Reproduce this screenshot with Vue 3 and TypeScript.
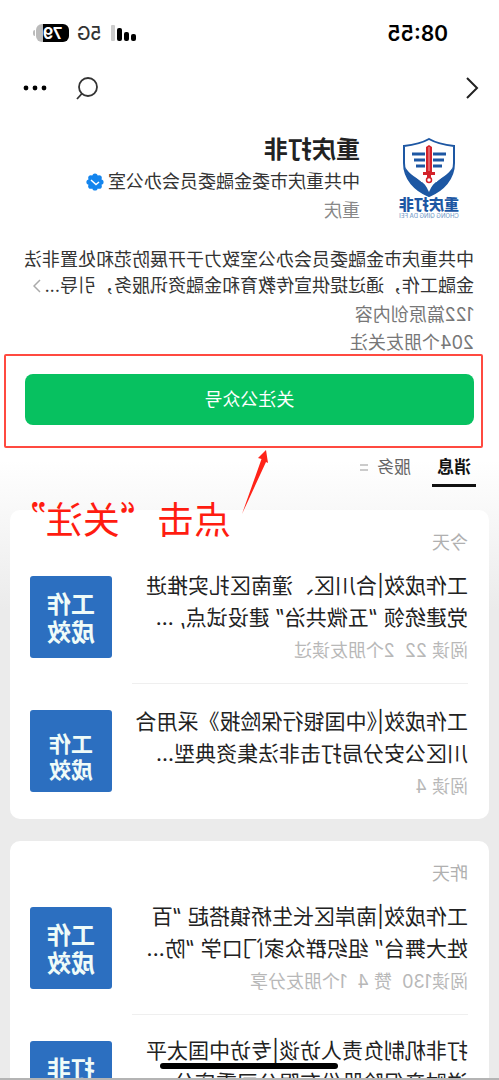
<script setup lang="ts">
interface Article {
  lines: string[]
  meta: string
  thumb: [string, string]
  small?: boolean
}
interface Day {
  label: string
  articles: Article[]
}

const days: Day[] = [
  {
    label: '今天',
    articles: [
      {
        lines: ['工作成效|合川区、潼南区扎实推进', '党建统领 “五微共治” 建设试点, ...'],
        meta: '阅读 22\u00a0 2个朋友读过',
        thumb: ['工作', '成效'],
      },
      {
        lines: ['工作成效|《中国银行保险报》采用合', '川区公安分局打击非法集资典型...'],
        meta: '阅读 4',
        thumb: ['工作', '成效'],
        small: true,
      },
    ],
  },
  {
    label: '昨天',
    articles: [
      {
        lines: ['工作成效|南岸区长生桥镇搭起 “百', '姓大舞台” 组织群众家门口学 “防...'],
        meta: '阅读130\u00a0 赞 4\u00a0 1个朋友分享',
        thumb: ['工作', '成效'],
      },
      {
        lines: ['打非机制负责人访谈|专访中国太平', '洋财产保险股份有限公司重庆分...'],
        meta: '阅读 96',
        thumb: ['打非', '访谈'],
      },
    ],
  },
]
</script>

<template>
  <div class="phone">
    <header class="status">
      <span class="time">08:55</span>
      <span class="signals">
        <svg width="27" height="18" viewBox="0 0 27 18" aria-hidden="true">
          <rect x="1" y="10" width="5" height="7" rx="2" fill="#000" />
          <rect x="8" y="8" width="5" height="9" rx="2" fill="#000" />
          <rect x="15" y="4" width="5" height="13" rx="2" fill="#000" />
          <rect x="22" y="1" width="4" height="16" rx="1" fill="#ccc" />
        </svg>
        <span class="net">5G</span>
        <span class="battery">79</span>
      </span>
    </header>

    <nav class="nav">
      <button class="icon-btn" aria-label="返回">
        <svg width="14" height="24" viewBox="0 0 14 24"><path d="M12 2 L2 12 L12 22" fill="none" stroke="#222" stroke-width="2" /></svg>
      </button>
      <span class="nav-right">
        <button class="icon-btn" aria-label="搜索">
          <svg width="24" height="24" viewBox="0 0 24 24">
            <circle cx="11" cy="11" r="9" fill="none" stroke="#333" stroke-width="1.800" />
            <path d="M17 17.500 L22 23" stroke="#333" stroke-width="1.800" />
          </svg>
        </button>
        <button class="icon-btn" aria-label="更多">
          <svg width="24" height="6" viewBox="0 0 24 6">
            <circle cx="3" cy="3" r="2.400" /><circle cx="12" cy="3" r="2.400" /><circle cx="21" cy="3" r="2.400" />
          </svg>
        </button>
      </span>
    </nav>

    <section class="profile">
      <svg class="logo" width="68" height="84" viewBox="0 0 68 84" role="img" aria-label="重庆打非">
        <path d="M34 3 C27 7 18 9 9 10 V27 C9 43 20 54 34 60 C48 54 59 43 59 27 V10 C50 9 41 7 34 3Z" fill="#fff" stroke="#1d57a3" stroke-width="2" />
        <path d="M10 31 C15 39 22 42 27 46 C31 49 32 52 34 56 C36 52 37 49 41 46 C46 42 53 39 58 31 C57 45 46 55 34 60 C22 55 11 45 10 31Z" fill="#1d57a3" />
        <path d="M16 36 L27 46 M52 36 L41 46" stroke="#fff" stroke-width="1" />
        <path d="M17 18 H30 M38 18 H51 M19 24 H30 M38 24 H49 M21 30 H30 M38 30 H47" stroke="#1d57a3" stroke-width="3" />
        <path d="M31 11 L34 9 L37 11 V36 H40 V39 H36 V42 H32 V39 H28 V36 H31Z" fill="#d3222a" />
        <path d="M34 11 V35" stroke="#f0a0a0" stroke-width="1" />
        <circle cx="34" cy="44" r="2.500" fill="none" stroke="#d3222a" stroke-width="1.500" />
        <text x="34" y="74" class="logo-name" text-anchor="middle">重庆打非</text>
        <text x="34" y="82" class="logo-sub" text-anchor="middle">CHONG QING DA FEI</text>
      </svg>
      <div class="who">
        <h1>重庆打非</h1>
        <p class="org">
          中共重庆市委金融委员会办公室
          <svg width="18" height="18" viewBox="0 0 18 18" role="img" aria-label="已认证">
            <g fill="#1485ee">
              <circle cx="9" cy="9" r="7" />
              <circle cx="9" cy="3" r="2.600" /><circle cx="9" cy="15" r="2.600" />
              <circle cx="3" cy="9" r="2.600" /><circle cx="15" cy="9" r="2.600" />
              <circle cx="4.800" cy="4.800" r="2.600" /><circle cx="13.200" cy="4.800" r="2.600" />
              <circle cx="4.800" cy="13.200" r="2.600" /><circle cx="13.200" cy="13.200" r="2.600" />
            </g>
            <path d="M5 9 L8 11.500 L13 7" fill="none" stroke="#fff" stroke-width="1.500" />
          </svg>
        </p>
        <p class="place">重庆</p>
      </div>
    </section>

    <section class="about">
      <p class="desc">
        <span class="line">中共重庆市金融委员会办公室致力于开展防范和处置非法</span>
        <span class="line split">
          <span>金融工作，通过提供宣传教育和金融资讯服务，引导...</span>
          <svg width="8" height="14" viewBox="0 0 8 14"><path d="M1 1 L7 7 L1 13" fill="none" stroke="#aaa" stroke-width="1.500" /></svg>
        </span>
      </p>
      <p class="stat">122篇原创内容</p>
      <p class="stat">204个朋友关注</p>
    </section>

    <div class="follow-wrap">
      <button class="follow">关注公众号</button>
      <div class="frame"></div>
      <svg class="arrow" width="32" height="66" viewBox="0 0 32 66" aria-hidden="true">
        <path d="M6 1 L14 9 L10.500 10 L30 65 L6 13 L4 14Z" fill="#ff2318" />
      </svg>
      <span class="hint">点击“关注”</span>
    </div>

    <div class="tabs">
      <button class="tab active">消息</button>
      <button class="tab">服务</button>
      <svg width="8" height="8" viewBox="0 0 8 8" aria-hidden="true"><path d="M0 1 H8 M0 6 H8" stroke="#bbb" stroke-width="1.500" /></svg>
    </div>

    <main class="feed">
      <section v-for="day in days" :key="day.label" class="card">
        <h2>{{ day.label }}</h2>
        <article v-for="(a, i) in day.articles" :key="i">
          <div class="body">
            <h3>
              <span v-for="l in a.lines" :key="l" class="line">
                <template v-for="(part, k) in l.split('《')" :key="k"><span v-if="k > 0" class="half">《</span>{{ part }}</template>
              </span>
            </h3>
            <p class="meta">{{ a.meta }}</p>
          </div>
          <div class="thumb" :class="{ small: a.small }">
            <span>{{ a.thumb[0] }}</span>
            <span>{{ a.thumb[1] }}</span>
          </div>
        </article>
      </section>
    </main>
    <div class="home"></div>
  </div>
</template>

<style>
body {
  margin: 0;
  background: #ebebeb;
}
</style>

<style scoped>
* {
  box-sizing: border-box;
}
.phone {
  position: relative;
  height: 100vh;
  overflow: hidden;
  transform: scaleX(-1);
  background: linear-gradient(#fff 460px, #ebebeb 610px);
  border-bottom: 2px solid #b4b4b4;
  font-family: Inter, "Noto Sans CJK SC", sans-serif;
  font-size: 18px;
  color: #222;
}
h1, h2, h3, p {
  margin: 0;
  font-weight: 400;
}
button {
  padding: 0;
  border: 0;
  background: none;
  font: inherit;
  color: inherit;
}
svg {
  display: block;
  flex: none;
}
.line {
  display: block;
  white-space: nowrap;
}
.status {
  display: flex;
  justify-content: space-between;
  align-items: center;
  height: 66px;
  padding: 0 33px 0 51px;
}
.time {
  font-size: 21px;
  font-weight: 600;
  color: #000;
}
.signals {
  display: flex;
  align-items: center;
  gap: 8px;
}
.net {
  font-weight: 500;
  color: #333;
}
.battery {
  position: relative;
  width: 33px;
  height: 18px;
  margin-right: 3px;
  border-radius: 6px;
  background: linear-gradient(90deg, #000 79%, #bbb 79%);
  color: #fff;
  font-size: 16px;
  font-weight: 700;
  line-height: 18px;
  text-align: center;
}
.battery::after {
  content: "";
  position: absolute;
  right: -3px;
  top: 6px;
  width: 2px;
  height: 6px;
  border-radius: 0 2px 2px 0;
  background: #bbb;
}
.nav {
  display: flex;
  justify-content: space-between;
  align-items: center;
  height: 44px;
  padding: 0 23px 0 20px;
}
.nav-right {
  display: flex;
  align-items: center;
  gap: 28px;
}
.profile {
  display: flex;
  gap: 35px;
  padding: 23px 24px 0 36px;
}
.logo {
  margin-top: 3px;
}
.logo-name {
  font: 900 15px "Noto Sans CJK SC", sans-serif;
  fill: #1d57a3;
}
.logo-sub {
  font: 500 6px Inter, sans-serif;
  fill: #7d9fcb;
}
h1 {
  font-size: 24px;
  font-weight: 600;
  line-height: 34px;
}
.org, .place {
  line-height: 29px;
}
.org {
  display: flex;
  align-items: center;
  gap: 4px;
  white-space: nowrap;
  color: #333;
}
.place {
  color: #888;
}
.about {
  padding: 22px 24px 0 25px;
}
.desc {
  margin-bottom: 2px;
  line-height: 26px;
  color: #333;
}
.split {
  display: flex;
  justify-content: space-between;
  align-items: center;
  padding-right: 9px;
}
.stat {
  line-height: 28px;
  color: #777;
}
.follow-wrap {
  position: relative;
  margin: 17px 25px 0;
}
.follow {
  display: block;
  width: 100%;
  height: 51px;
  padding-bottom: 3px;
  border-radius: 8px;
  background: #07c160;
  color: #fff;
}
.frame {
  position: absolute;
  inset: -20px -21px -23px -9px;
  border: 2px solid #ff4a40;
  border-radius: 2px;
}
.arrow {
  position: absolute;
  left: 202px;
  top: 75px;
  z-index: 2;
}
.hint {
  position: absolute;
  left: 243px;
  top: 119px;
  z-index: 2;
  font-family: "Noto Sans CJK SC", sans-serif;
  font-size: 37px;
  line-height: 50px;
  white-space: nowrap;
  color: #ff1c10;
}
.tabs {
  display: flex;
  align-items: center;
  gap: 16px;
  margin: 28px 23px 0;
  font-size: 17px;
}
.tabs svg {
  margin: 0 0 4px -12px;
}
.tab {
  padding: 0 5px 3px;
  border-bottom: 3px solid transparent;
  line-height: 28px;
  color: #666;
}
.tab.active {
  border-color: #111;
  font-weight: 700;
  color: #111;
}
.feed {
  display: flex;
  flex-direction: column;
  gap: 22px;
  margin: 23px 10px 0;
}
.card {
  padding: 20px 20px 0 21px;
  border-radius: 10px;
  background: #fff;
}
h2 {
  margin-bottom: 14px;
  font-size: 18px;
  line-height: 26px;
  color: #b0b0b0;
}
article {
  display: flex;
  justify-content: space-between;
}
article + article .body {
  border-top: 1px solid #efefef;
  padding-top: 20px;
}
article + article .thumb {
  margin-top: 27px;
}
.body {
  width: 336px;
  padding-bottom: 19px;
}
h3 {
  margin-bottom: 4px;
  font-size: 21px;
  line-height: 32px;
}
.half {
  font-family: "Noto Sans CJK SC", sans-serif;
  font-feature-settings: "halt";
}
.meta {
  line-height: 26px;
  white-space: nowrap;
  color: #b8b8b8;
}
.thumb {
  display: flex;
  flex-direction: column;
  align-items: center;
  justify-content: center;
  width: 82px;
  height: 82px;
  margin-top: 6px;
  padding-top: 4px;
  border-radius: 3px;
  background: #2c6fc0;
  color: #effbf8;
  font-size: 24px;
  font-weight: 700;
  line-height: 28px;
}
.thumb.small {
  padding-top: 12px;
  font-size: 22px;
  line-height: 26px;
}
.home {
  position: absolute;
  left: 50%;
  bottom: 9px;
  width: 178px;
  height: 6px;
  margin-left: -89px;
  border-radius: 3px;
  background: #000;
}
</style>
